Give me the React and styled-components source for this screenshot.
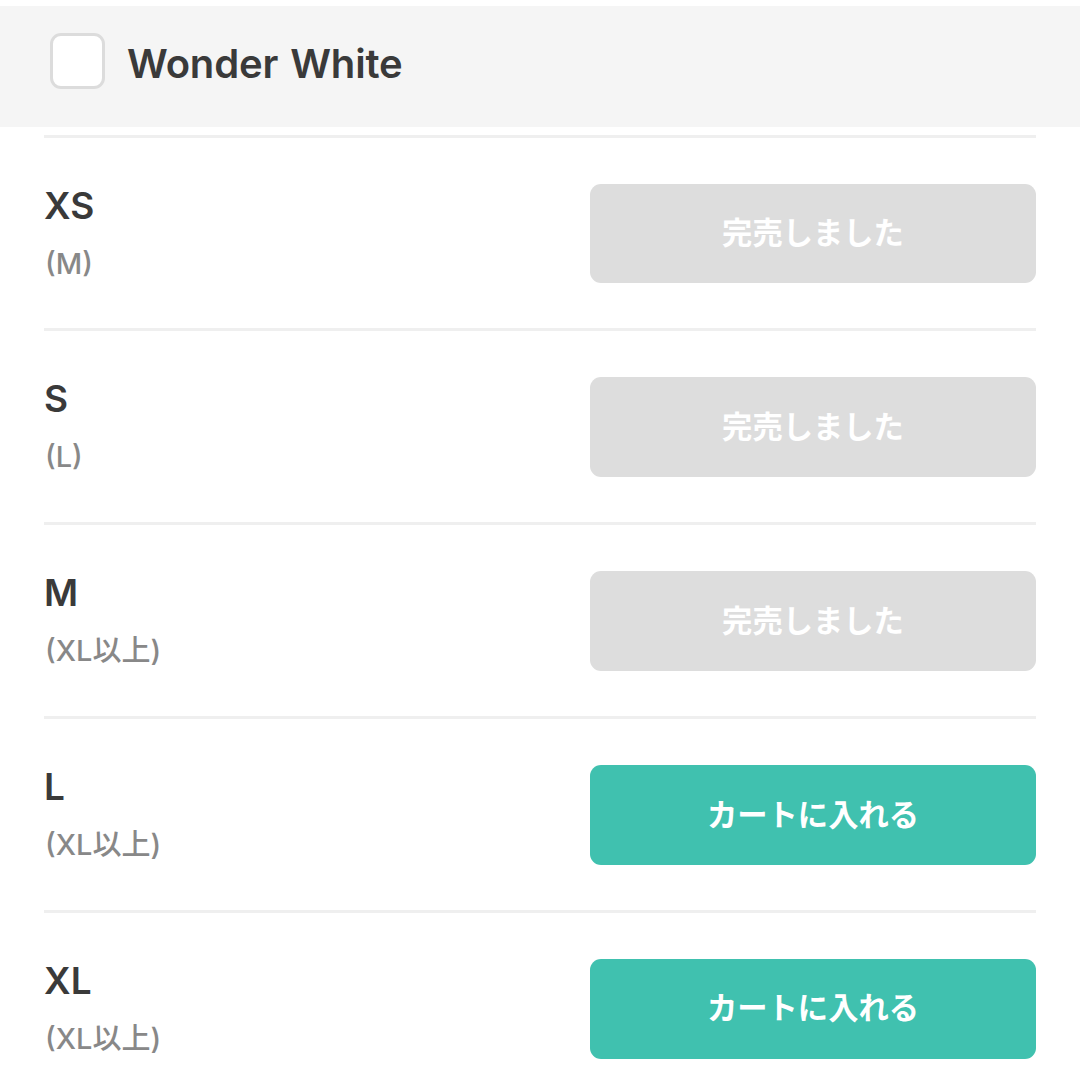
import styled, { createGlobalStyle } from 'styled-components';

const GlobalStyle = createGlobalStyle`
  * {
    box-sizing: border-box;
  }
  body {
    margin: 0;
    background: #fff;
    overflow: hidden;
    font-family: Inter, 'Noto Sans CJK JP', sans-serif;
  }
`;

const Page = styled.main`
  height: 1080px;
  padding-top: 6px;
  overflow: hidden;
`;

const Header = styled.header`
  display: flex;
  align-items: flex-start;
  height: 121px;
  padding: 27px 50px 0;
  background: #f5f5f5;
`;

const Checkbox = styled.span`
  width: 55px;
  height: 56px;
  border: 3px solid #dcdcdc;
  border-radius: 11px;
  background: #fff;
`;

const ColorName = styled.h2`
  margin: 0 0 0 22px;
  color: #3a3a3a;
  font-size: 40px;
  font-weight: 600;
  line-height: 62px;
  word-spacing: 2px;
  letter-spacing: -0.15px;
`;

const SizeList = styled.ul`
  margin: 7.6px 44px 0;
  padding: 0;
  list-style: none;
`;

const SizeRow = styled.li`
  display: flex;
  justify-content: space-between;
  height: 193.9px;
  padding-top: 46px;
  border-top: 3px solid #efefef;
`;

const SizeName = styled.div`
  color: #3a3a3a;
  font-size: 37px;
  font-weight: 600;
  line-height: 44px;
`;

const SizeNote = styled.div`
  margin-top: 12px;
  padding-left: 1px;
  color: #888;
  font-size: 29px;
  font-weight: 500;
  line-height: 48px;
`;

const Button = styled.button`
  width: 446px;
  height: 99.5px;
  padding: 0 0 5px;
  border: 0;
  border-radius: 11px;
  background: ${(props) => (props.disabled ? '#dddddd' : '#40c1af')};
  color: #fff;
  font-family: 'Noto Sans CJK JP', sans-serif;
  font-size: 30.3px;
  font-weight: 700;
`;

const sizes = [
  { name: 'XS', note: '(M)', soldOut: true },
  { name: 'S', note: '(L)', soldOut: true },
  { name: 'M', note: '(XL以上)', soldOut: true },
  { name: 'L', note: '(XL以上)', soldOut: false },
  { name: 'XL', note: '(XL以上)', soldOut: false },
];

const App = () => {
  return (
    <>
      <GlobalStyle />
      <Page>
        <Header>
          <Checkbox />
          <ColorName>Wonder White</ColorName>
        </Header>
        <SizeList>
          {sizes.map((size) => (
            <SizeRow key={size.name}>
              <div>
                <SizeName>{size.name}</SizeName>
                <SizeNote>{size.note}</SizeNote>
              </div>
              <Button disabled={size.soldOut}>{size.soldOut ? '完売しました' : 'カートに入れる'}</Button>
            </SizeRow>
          ))}
        </SizeList>
      </Page>
    </>
  );
};

export default App;
